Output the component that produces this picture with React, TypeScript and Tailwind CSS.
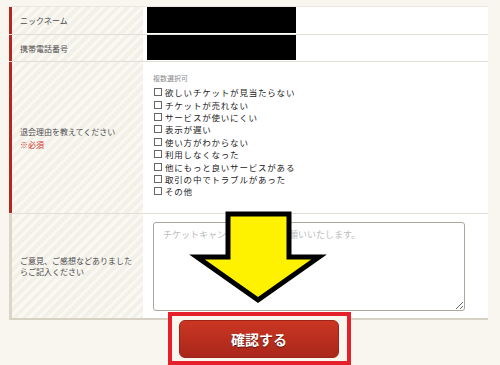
import React from 'react'

const reasons = [
    '欲しいチケットが見当たらない',
    'チケットが売れない',
    'サービスが使いにくい',
    '表示が遅い',
    '使い方がわからない',
    '利用しなくなった',
    '他にもっと良いサービスがある',
    '取引の中でトラブルがあった',
    'その他',
]

const stripes =
    'bg-[repeating-linear-gradient(135deg,#faf8f3_0px,#faf8f3_3px,#f3f0e8_3px,#f3f0e8_7px)]'

function Row({
    label,
    children,
    height,
    last = false,
}: {
    label: React.ReactNode
    children: React.ReactNode
    height: string
    last?: boolean
}) {
    return (
        <div
            className={`flex ${height} ${last ? 'border-b-2 border-[#d8d2c4]' : 'border-b border-[#e2ded6]'}`}
        >
            <div
                className={`w-[134px] shrink-0 flex items-center pl-[8px] border-l-[3px] ${last ? 'border-[#dcd6c8]' : 'border-[#b3281e]'} ${stripes}`}
            >
                <div className="text-[8px] leading-[11px] text-[#4d4d4d]">{label}</div>
            </div>
            <div className="flex-1 bg-white">{children}</div>
        </div>
    )
}

export default function App() {
    return (
        <div className="relative w-[500px] h-[365px] overflow-hidden bg-[#f9f6f0] [font-family:'Noto_Sans_CJK_JP','Noto_Sans',sans-serif]">
            <div className="ml-[9px] mt-[6px] w-[479px] border-t border-[#ebe6de]">
                <Row label="ニックネーム" height="h-[28px]">
                    <div className="h-full pl-[4px] pb-px">
                        <div className="w-[149px] h-full bg-black" />
                    </div>
                </Row>
                <Row label="携帯電話番号" height="h-[27px]">
                    <div className="h-full pl-[4px] pb-px">
                        <div className="w-[149px] h-full bg-black" />
                    </div>
                </Row>
                <Row
                    height="h-[152px]"
                    label={
                        <>
                            <div>退会理由を教えてください</div>
                            <div className="mt-[2px] text-[#d4322a]">※必須</div>
                        </>
                    }
                >
                    <div className="pl-[10px] pt-[11px]">
                        <div className="text-[7px] leading-[10px] text-[#8a8a8a]">複数選択可</div>
                        <div className="mt-[3px] flex flex-col">
                            {reasons.map((r) => (
                                <label
                                    key={r}
                                    className="flex items-center h-[12.4px] text-[8.5px] tracking-[0.8px] leading-[12px] text-[#222]"
                                >
                                    <input
                                        type="checkbox"
                                        className="appearance-none w-[8px] h-[8px] border border-[#666] bg-white mr-[3px] ml-px"
                                    />
                                    <span className="leading-[12px]">{r}</span>
                                </label>
                            ))}
                        </div>
                    </div>
                </Row>
                <Row
                    last
                    height="h-[106px]"
                    label={
                        <>
                            <div>ご意見、ご感想などありました</div>
                            <div>らご記入ください</div>
                        </>
                    }
                >
                    <div className="pl-[10px] pt-[8px]">
                        <textarea
                            placeholder="チケットキャンセルの理由をお願いいたします。"
                            className="block w-[312px] h-[89px] rounded-[3px] border border-[#aaa69c] bg-white px-[9px] py-[6px] text-[9px] leading-[12px] text-[#333] placeholder:text-[#bdbdbd] outline-none"
                        />
                    </div>
                </Row>
            </div>

            {/* red highlight around the submit button */}
            <div className="absolute left-[168px] top-[312px] w-[183px] h-[53px] border-[4px] border-[#e5202a] bg-[#f9f6f0]" />

            <button
                type="button"
                className="relative z-10 ml-[179px] w-[160px] h-[38px] rounded-[6px] border border-[#9c2418] bg-[linear-gradient(#cb3622,#a9271b)] text-white text-[14px] font-bold [text-shadow:0_1px_1px_#5e130c]"
            >
                確認する
            </button>

            {/* yellow arrow annotation */}
            <svg className="absolute left-0 top-0 z-20 pointer-events-none" width="500" height="365">
                <polygon
                    points="228,214 289,214 289,257 319,257 258,300 197,257 228,257"
                    fill="#fff200"
                    stroke="#000"
                    strokeWidth="5"
                    strokeLinejoin="miter"
                />
            </svg>
        </div>
    )
}
